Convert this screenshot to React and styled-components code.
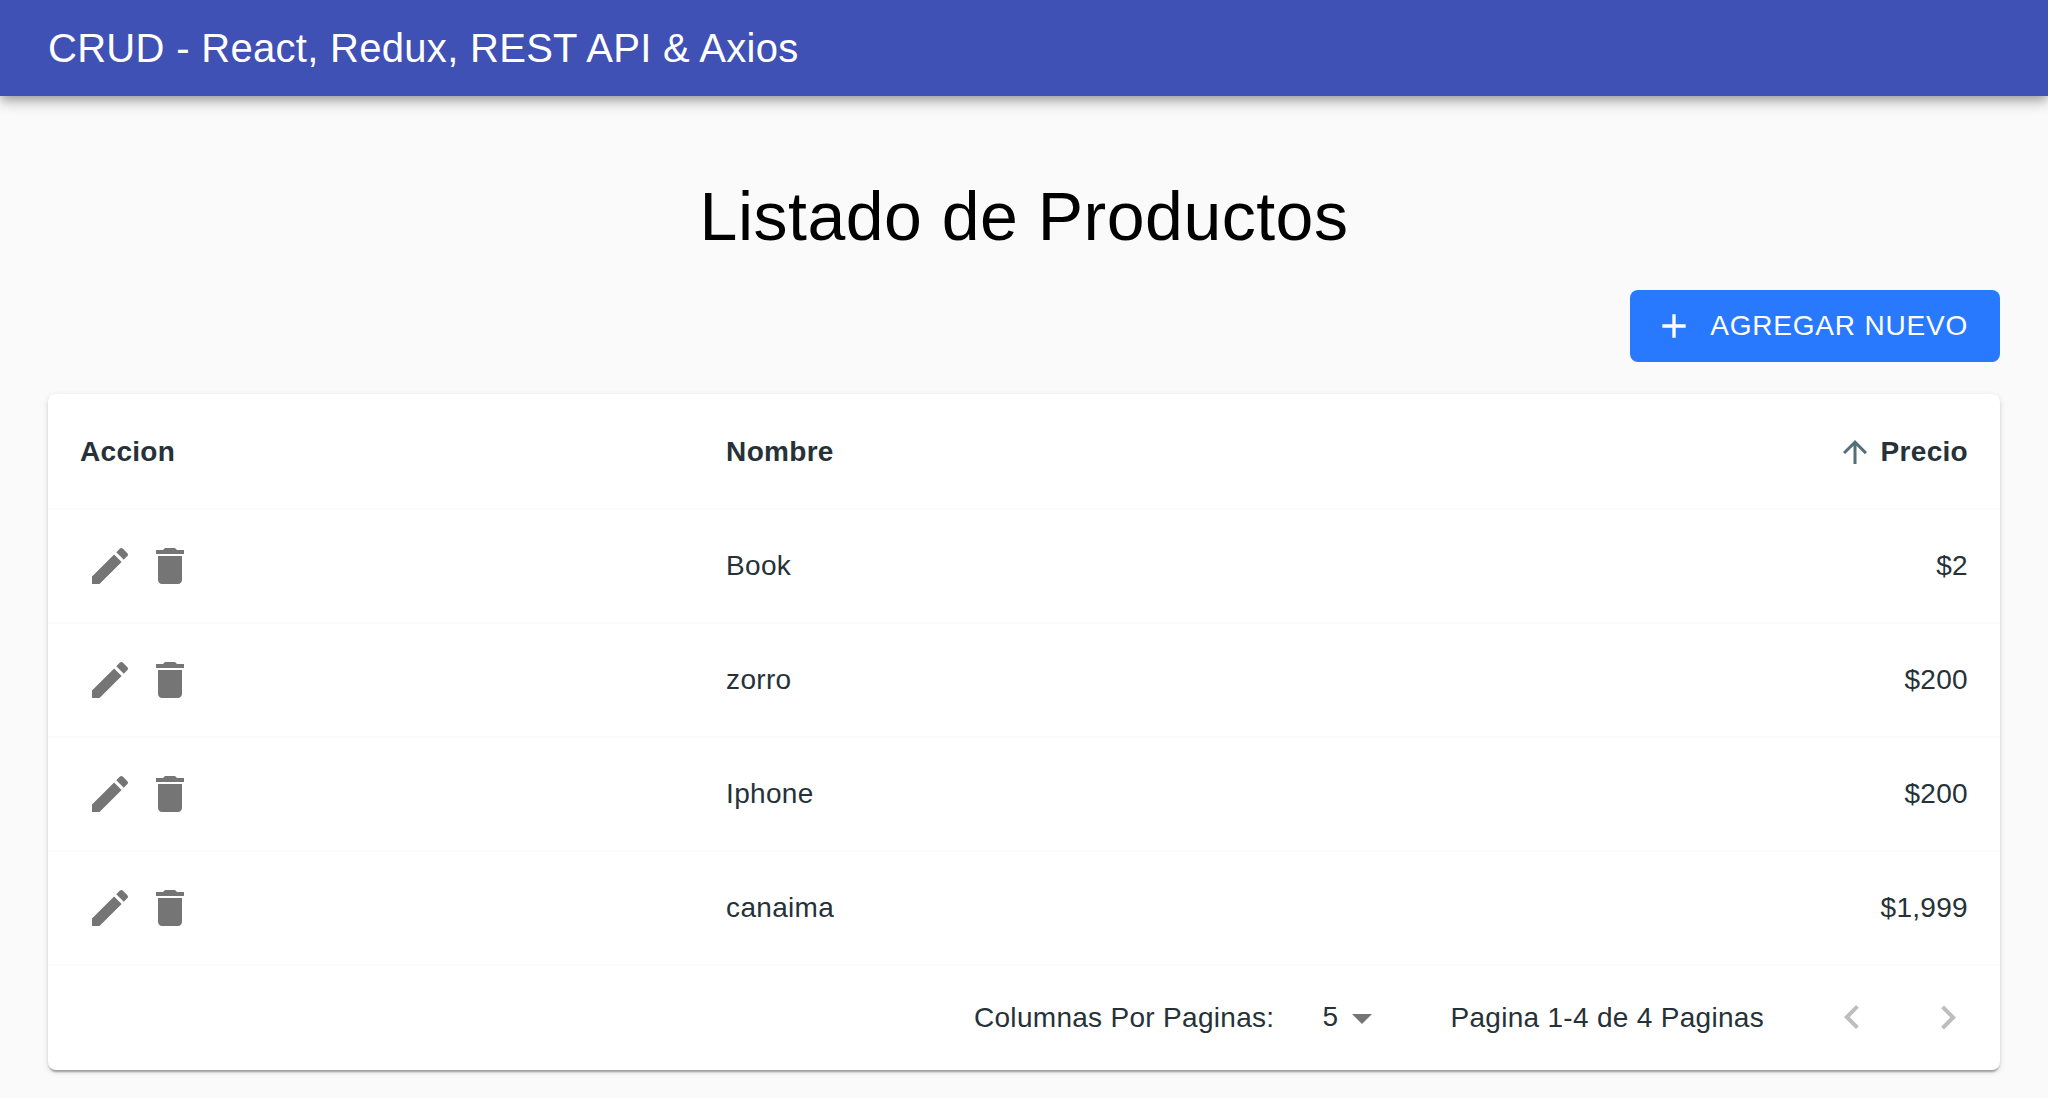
import React, { useState } from "react";
import styled, { createGlobalStyle } from "styled-components";

const GlobalStyle = createGlobalStyle`
  *, *::before, *::after { box-sizing: border-box; }
  body {
    margin: 0;
    background: #fafafa;
    color: #263238;
    font-family: "Liberation Sans", Arial, Helvetica, sans-serif;
    font-size: 28px;
    line-height: 40px;
    letter-spacing: 0.01071em;
  }
  button, select { font: inherit; letter-spacing: inherit; color: inherit; }
`;

const AppBar = styled.header`
  display: flex;
  align-items: center;
  min-height: 96px;
  padding: 0 48px;
  background: #3f51b5;
  color: #fff;
  box-shadow:
    0 4px 8px -2px rgba(0, 0, 0, 0.2),
    0 8px 10px 0 rgba(0, 0, 0, 0.14),
    0 2px 20px 0 rgba(0, 0, 0, 0.12);
`;

const Brand = styled.div`
  font-size: 40px;
  line-height: 64px;
  letter-spacing: 0.0075em;
`;

const Content = styled.main`
  padding: 78px 48px 28px;
`;

const PageTitle = styled.h1`
  margin: 0 0 32px;
  color: #000;
  font-size: 68px;
  font-weight: 400;
  line-height: 84px;
  letter-spacing: 0.00735em;
  text-align: center;
`;

const Actions = styled.div`
  display: flex;
  justify-content: flex-end;
  margin-bottom: 32px;
`;

const PrimaryButton = styled.button`
  display: inline-flex;
  align-items: center;
  gap: 16px;
  height: 72px;
  padding: 0 32px 0 24px;
  border: 0;
  border-radius: 8px;
  background: #2979ff;
  color: #fff;
  letter-spacing: 0.02857em;
  text-transform: uppercase;
  cursor: pointer;
`;

const Icon = styled.svg.attrs({ viewBox: "0 0 24 24", "aria-hidden": true })`
  display: block;
  flex: none;
  width: ${(p) => p.$size}px;
  height: ${(p) => p.$size}px;
  fill: currentColor;
`;

const Card = styled.section`
  border-radius: 8px;
  background: #fff;
  box-shadow:
    0 4px 2px -2px rgba(0, 0, 0, 0.2),
    0 2px 2px 0 rgba(0, 0, 0, 0.14),
    0 2px 6px 0 rgba(0, 0, 0, 0.12);
`;

const Table = styled.table`
  width: 100%;
  table-layout: fixed;
  border-collapse: separate;
  border-spacing: 0;
`;

const Col = styled.col`
  width: ${(p) => p.$width};
`;

const HeadCell = styled.th`
  height: 116px;
  padding: 2px 32px 0;
  border-bottom: 2px solid #fbfbfb;
  font-weight: 700;
  text-align: ${(p) => (p.$end ? "right" : "left")};
`;

const Cell = styled.td`
  height: 114px;
  padding: 0 32px;
  border-bottom: 2px solid #fbfbfb;
  text-align: ${(p) => (p.$end ? "right" : "left")};
`;

const SortButton = styled.button`
  display: flex;
  align-items: center;
  gap: 8px;
  margin-left: auto;
  padding: 0;
  border: 0;
  background: none;
  cursor: pointer;

  svg { color: #546e7a; }
`;

const RowActions = styled.div`
  display: flex;
`;

const IconButton = styled.button`
  padding: 6px;
  border: 0;
  background: none;
  color: rgba(0, 0, 0, 0.54);
  cursor: pointer;
`;

const Footer = styled.div`
  display: flex;
  align-items: center;
  justify-content: flex-end;
  min-height: 104px;
  padding-right: 4px;
`;

const SelectBox = styled.div`
  position: relative;
  margin: 0 64px 0 18px;

  svg {
    position: absolute;
    top: 0;
    right: 0;
    color: rgba(0, 0, 0, 0.54);
    pointer-events: none;
  }
`;

const Select = styled.select`
  display: block;
  appearance: none;
  width: 94px;
  height: 48px;
  padding: 0 48px 2px 16px;
  border: 0;
  background: none;
  text-align-last: right;
`;

const PageButton = styled.button`
  padding: 4px 24px;
  border: 0;
  background: none;

  &:first-of-type { margin-left: 40px; }
  &:disabled { color: rgba(0, 0, 0, 0.26); }
`;

const paths = {
  add: "M19 13h-6v6h-2v-6H5v-2h6V5h2v6h6v2z",
  up: "M4 12l1.41 1.41L11 7.83V20h2V7.83l5.58 5.59L20 12l-8-8-8 8z",
  edit: "M3 17.25V21h3.75L17.81 9.94l-3.75-3.75L3 17.25zM20.71 7.04c.39-.39.39-1.02 0-1.41l-2.34-2.34c-.39-.39-1.02-.39-1.41 0l-1.83 1.83 3.75 3.75 1.83-1.83z",
  remove: "M6 19c0 1.1.9 2 2 2h8c1.1 0 2-.9 2-2V7H6v12zM19 4h-3.5l-1-1h-5l-1 1H5v2h14V4z",
  drop: "M7 10l5 5 5-5z",
  left: "M15.41 16.09l-4.58-4.59 4.58-4.59L14 5.5l-6 6 6 6z",
  right: "M8.59 16.34l4.58-4.59-4.58-4.59L10 5.75l6 6-6 6z",
};

function Glyph({ name, size = 48 }) {
  return (
    <Icon $size={size}>
      <path d={paths[name]} />
    </Icon>
  );
}

const products = [
  { name: "Book", price: 2 },
  { name: "zorro", price: 200 },
  { name: "Iphone", price: 200 },
  { name: "canaima", price: 1999 },
];

const formatPrice = (price) => `$${price.toLocaleString("en-US")}`;

export default function App() {
  const [perPage, setPerPage] = useState("5");

  return (
    <>
      <GlobalStyle />
      <AppBar>
        <Brand>CRUD - React, Redux, REST API &amp; Axios</Brand>
      </AppBar>
      <Content>
        <PageTitle>Listado de Productos</PageTitle>
        <Actions>
          <PrimaryButton type="button">
            <Glyph name="add" size={40} />
            Agregar nuevo
          </PrimaryButton>
        </Actions>
        <Card>
          <Table>
            <colgroup>
              <Col $width="33.1%" />
              <Col $width="33.9%" />
              <Col $width="33%" />
            </colgroup>
            <thead>
              <tr>
                <HeadCell scope="col">Accion</HeadCell>
                <HeadCell scope="col">Nombre</HeadCell>
                <HeadCell scope="col" $end aria-sort="ascending">
                  <SortButton type="button">
                    <Glyph name="up" size={36} />
                    Precio
                  </SortButton>
                </HeadCell>
              </tr>
            </thead>
            <tbody>
              {products.map((product) => (
                <tr key={product.name}>
                  <Cell>
                    <RowActions>
                      <IconButton type="button" aria-label={`Editar ${product.name}`}>
                        <Glyph name="edit" />
                      </IconButton>
                      <IconButton type="button" aria-label={`Eliminar ${product.name}`}>
                        <Glyph name="remove" />
                      </IconButton>
                    </RowActions>
                  </Cell>
                  <Cell>{product.name}</Cell>
                  <Cell $end>{formatPrice(product.price)}</Cell>
                </tr>
              ))}
            </tbody>
          </Table>
          <Footer>
            <label htmlFor="per-page">Columnas Por Paginas:</label>
            <SelectBox>
              <Select
                id="per-page"
                value={perPage}
                onChange={(event) => setPerPage(event.target.value)}
              >
                <option value="5">5</option>
              </Select>
              <Glyph name="drop" />
            </SelectBox>
            <span>Pagina 1-4 de 4 Paginas</span>
            <PageButton type="button" disabled aria-label="Pagina anterior">
              <Glyph name="left" />
            </PageButton>
            <PageButton type="button" disabled aria-label="Pagina siguiente">
              <Glyph name="right" />
            </PageButton>
          </Footer>
        </Card>
      </Content>
    </>
  );
}
